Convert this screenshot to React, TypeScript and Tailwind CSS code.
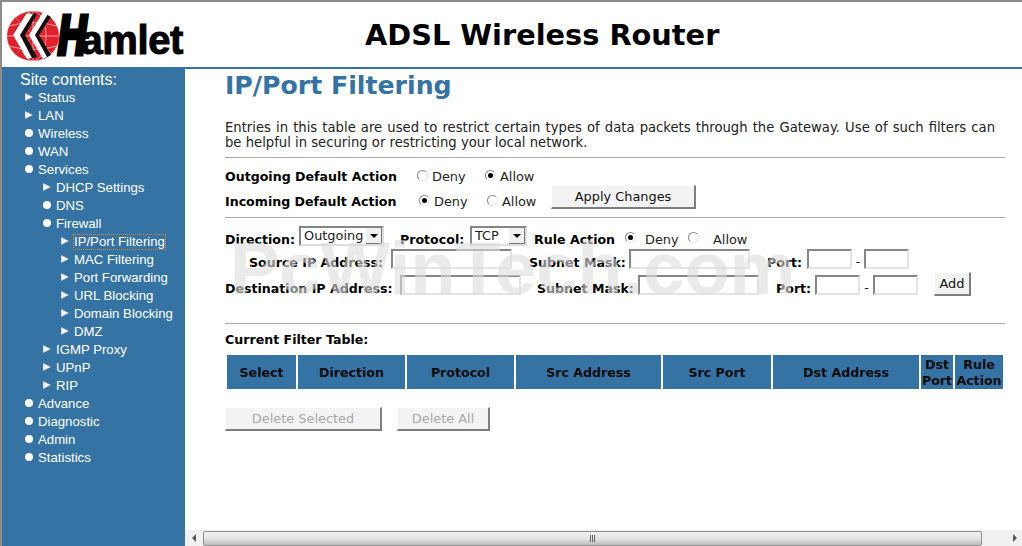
import React from 'react';

type NavItem = { label: string; level: number; icon: 'arrow' | 'dot'; active?: boolean };

const navItems: NavItem[] = [
  { label: 'Status', level: 1, icon: 'arrow' },
  { label: 'LAN', level: 1, icon: 'arrow' },
  { label: 'Wireless', level: 1, icon: 'dot' },
  { label: 'WAN', level: 1, icon: 'dot' },
  { label: 'Services', level: 1, icon: 'dot' },
  { label: 'DHCP Settings', level: 2, icon: 'arrow' },
  { label: 'DNS', level: 2, icon: 'dot' },
  { label: 'Firewall', level: 2, icon: 'dot' },
  { label: 'IP/Port Filtering', level: 3, icon: 'arrow', active: true },
  { label: 'MAC Filtering', level: 3, icon: 'arrow' },
  { label: 'Port Forwarding', level: 3, icon: 'arrow' },
  { label: 'URL Blocking', level: 3, icon: 'arrow' },
  { label: 'Domain Blocking', level: 3, icon: 'arrow' },
  { label: 'DMZ', level: 3, icon: 'arrow' },
  { label: 'IGMP Proxy', level: 2, icon: 'arrow' },
  { label: 'UPnP', level: 2, icon: 'arrow' },
  { label: 'RIP', level: 2, icon: 'arrow' },
  { label: 'Advance', level: 1, icon: 'dot' },
  { label: 'Diagnostic', level: 1, icon: 'dot' },
  { label: 'Admin', level: 1, icon: 'dot' },
  { label: 'Statistics', level: 1, icon: 'dot' },
];

const levelClass: Record<number, string> = {
  1: 'pl-[23px]',
  2: 'pl-[41px]',
  3: 'pl-[59px]',
};

const columns = [
  { label: 'Select', cls: 'w-[69px]' },
  { label: 'Direction', cls: 'w-[107px]' },
  { label: 'Protocol', cls: 'w-[107px]' },
  { label: 'Src Address', cls: 'w-[145px]' },
  { label: 'Src Port', cls: 'w-[108px]' },
  { label: 'Dst Address', cls: 'w-[146px]' },
  { label: 'Dst Port', cls: 'w-[32px]' },
  { label: 'Rule Action', cls: 'w-[48px]' },
];

const Logo = () => (
  <div className="flex items-center h-[52px] pl-[5px]">
    <svg width="52" height="50" viewBox="0 0 52 50" className="shrink-0">
      <ellipse cx="26" cy="25" rx="26" ry="25" fill="#e0202a" />
      <g fill="none" stroke="#f6b0b0" strokeWidth="0.9">
        <ellipse cx="26" cy="25" rx="13" ry="25" />
        <path d="M2 15 Q26 8 50 15 M2 35 Q26 42 50 35 M26 0 V50 M0 25 H52" />
        <path d="M8 6 L46 44 M44 6 L10 42" opacity="0.6" />
      </g>
      <path d="M21 2 L8 24 L22 48 L30 46 L18 24 L30 3 Z" fill="#111" />
      <path d="M20 2 L6 24 L20 48 L25 47 L13 24 L26 3 Z" fill="#fff" />
      <path d="M37 2 L23 24 L37 48 L44 44 L32 24 L44 6 Z" fill="#111" />
      <path d="M36 1 L22 24 L36 48 L40 46 L28 24 L41 3 Z" fill="#fff" />
    </svg>
    <div className="flex items-baseline text-black font-bold font-['Liberation_Sans',Arial,sans-serif] -ml-[1px] mt-[4px]">
      <span className="inline-block italic text-[56px] leading-[50px] [-webkit-text-stroke:5px_#000] scale-x-[0.7] origin-left">H</span>
      <span className="text-[40px] leading-[50px] tracking-[-0.4px] [-webkit-text-stroke:1px_#000] -ml-[18px]">amlet</span>
    </div>
  </div>
);

const Arrow = () => (
  <svg width="8" height="8" viewBox="0 0 8 8" className="shrink-0 mr-[5px] mt-[-3px]">
    <path d="M0 0 L8 4 L0 8 Z" fill="#f4f4f4" stroke="#6b7f90" strokeWidth="0.4" />
  </svg>
);

const Dot = () => <span className="shrink-0 w-[8px] h-[8px] mr-[5px] mt-[-3px] rounded-full bg-white shadow-[0_0_1px_#555]" />;

const Sidebar = () => (
  <nav className="w-[183px] shrink-0 bg-[#3573a5] text-white font-['Liberation_Sans',Arial,sans-serif] pt-[2px]">
    <div className="pl-[18px] text-[16px] leading-[18px]">Site contents:</div>
    {navItems.map(item => (
      <div key={item.label} className={`flex items-center h-[18px] text-[13.2px] ${levelClass[item.level]}`}>
        {item.icon === 'arrow' ? <Arrow /> : <Dot />}
        <span className={item.active ? 'outline-1 outline-dotted outline-[#e0862a] leading-[14px]' : ''}>{item.label}</span>
      </div>
    ))}
  </nav>
);

const Radio = ({ on, className = '' }: { on?: boolean; className?: string }) => (
  <span className={`inline-flex items-center justify-center shrink-0 w-[11px] h-[11px] -mt-[2px] rounded-full border border-t-[#868686] border-l-[#868686] border-r-[#e8e8e8] border-b-[#e8e8e8] bg-white ${className}`}>
    {on && <span className="w-[5px] h-[5px] rounded-full bg-black" />}
  </span>
);

const ClassicButton = ({ children, className = '', disabled }: { children: React.ReactNode; className?: string; disabled?: boolean }) => (
  <button
    disabled={disabled}
    className={`h-[24px] shrink-0 pt-[2px] bg-[#f3f3f3] border-r-2 border-b-2 border-r-[#7e7e7e] border-b-[#7e7e7e] border-t border-l border-t-white border-l-white text-[12.9px] leading-none ${disabled ? 'text-[#a9a9a9]' : 'text-[#111]'} ${className}`}
  >
    {children}
  </button>
);

const TextBox = ({ className = '' }: { className?: string }) => (
  <input
    readOnly
    className={`h-[20px] shrink-0 bg-transparent border-2 border-t-[#868686] border-l-[#868686] border-r-[#e4e4e4] border-b-[#e4e4e4] ${className}`}
  />
);

const SelectBox = ({ value, className = '' }: { value: string; className?: string }) => (
  <span className={`inline-flex items-center justify-between shrink-0 h-[20px] border-2 border-t-[#868686] border-l-[#868686] border-r-[#dcdcdc] border-b-[#dcdcdc] pl-[3px] text-[12.9px] text-[#222] ${className}`}>
    <span>{value}</span>
    <span className="flex items-center justify-center w-[16px] h-[16px] bg-[#efefef] border-r border-b border-[#777]">
      <span className="w-0 h-0 border-x-[4px] border-x-transparent border-t-[4px] border-t-black" />
    </span>
  </span>
);

const Label = ({ children, className = '' }: { children: React.ReactNode; className?: string }) => (
  <b className={`shrink-0 mt-[8px] text-[12.6px] whitespace-nowrap ${className}`}>{children}</b>
);

const App = () => (
  <div className="relative w-[1022px] h-[546px] overflow-hidden bg-white flex flex-col border-t-2 border-l-2 border-[#8c8c8c] font-['DejaVu_Sans',Verdana,sans-serif] text-[12.9px] text-black">
    <header className="h-[67px] shrink-0 flex items-center border-b-2 border-[#3573a5]">
      <div className="w-[183px] shrink-0 pt-[2px]">
        <Logo />
      </div>
      <h1 className="ml-[180px] mt-[3px] text-[28.8px] font-bold whitespace-nowrap text-black">ADSL Wireless Router</h1>
    </header>

    <div className="flex flex-1 min-h-0">
      <Sidebar />
      <div className="flex-1 flex flex-col min-w-0">
        <main className="flex-1 pl-[40px] pr-[17px]">
          <h2 className="text-[25.2px] leading-[30px] font-bold text-[#3573a5] mt-[2px]">IP/Port Filtering</h2>
          <p className="mt-[19px] leading-[15px] text-justify text-[13.2px] text-[#222] w-[770px]">
            Entries in this table are used to restrict certain types of data packets through the Gateway. Use of such filters can be helpful in securing or restricting your local network.
          </p>
          <hr className="mt-[7px] w-[780px] border-t border-[#aaa]" />

          <div className="flex items-center h-[24px] mt-[6px]">
            <b className="w-[192px] mt-[2px] text-[12.6px]">Outgoing Default Action</b>
            <Radio />
            <span className="ml-[4px] w-[53px] mt-[2px] text-[#222]">Deny</span>
            <Radio on />
            <span className="ml-[4px] mt-[2px] text-[#222]">Allow</span>
          </div>
          <div className="flex items-center h-[24px] mt-[1px]">
            <b className="w-[194px] mt-[2px] text-[12.6px]">Incoming Default Action</b>
            <Radio on />
            <span className="ml-[4px] w-[53px] mt-[2px] text-[#222]">Deny</span>
            <Radio />
            <span className="ml-[4px] w-[49px] mt-[2px] text-[#222] whitespace-nowrap">Allow</span>
            <ClassicButton className="w-[145px] -mt-[8px]">Apply Changes</ClassicButton>
          </div>
          <hr className="mt-[4px] w-[780px] border-t border-[#aaa]" />

          <div className="flex items-center h-[20px] mt-[8px] whitespace-nowrap">
            <Label className="w-[74px]">Direction:</Label>
            <SelectBox value="Outgoing" className="w-[85px]" />
            <Label className="ml-[16px] w-[70px]">Protocol:</Label>
            <SelectBox value="TCP" className="w-[57px]" />
            <Label className="ml-[7px] w-[91px]">Rule Action</Label>
            <Radio on className="translate-y-[2px]" />
            <span className="ml-[9px] mt-[8px] w-[43px] text-[#222]">Deny</span>
            <Radio className="translate-y-[2px]" />
            <span className="ml-[14px] mt-[8px] text-[#222]">Allow</span>
          </div>
          <div className="flex items-center h-[20px] mt-[3px]">
            <Label className="ml-[24px] w-[142px]">Source IP Address:</Label>
            <TextBox className="w-[121px]" />
            <Label className="ml-[17px] w-[100px]">Subnet Mask:</Label>
            <TextBox className="w-[121px]" />
            <Label className="ml-[17px] w-[40px]">Port:</Label>
            <TextBox className="w-[45px]" />
            <span className="w-[12px] mt-[6px] text-center text-[#222]">-</span>
            <TextBox className="w-[45px]" />
          </div>
          <div className="flex items-center h-[20px] mt-[6px]">
            <Label className="w-[175px]">Destination IP Address:</Label>
            <TextBox className="w-[121px]" />
            <Label className="ml-[16px] w-[101px]">Subnet Mask:</Label>
            <TextBox className="w-[121px]" />
            <Label className="ml-[17px] w-[39px]">Port:</Label>
            <TextBox className="w-[45px]" />
            <span className="w-[13px] mt-[6px] text-center text-[#222]">-</span>
            <TextBox className="w-[45px]" />
            <ClassicButton className="ml-[16px] w-[37px] -mt-[2px]">Add</ClassicButton>
          </div>
          <hr className="mt-[28px] w-[780px] border-t border-[#aaa]" />

          <div className="mt-[8px] font-bold text-[12.6px] leading-[16px]">Current Filter Table:</div>
          <div className="flex gap-[2px] mt-[7px] ml-[2px]">
            {columns.map(col => (
              <div key={col.label} className={`${col.cls} h-[34px] pt-[1px] bg-[#3573a5] flex items-center justify-center text-center font-bold text-[12.6px] leading-[16px] text-[#0c0c0c]`}>
                {col.label}
              </div>
            ))}
          </div>
          <div className="flex gap-[15px] mt-[18px]">
            <ClassicButton disabled className="w-[157px]">Delete Selected</ClassicButton>
            <ClassicButton disabled className="w-[93px]">Delete All</ClassicButton>
          </div>
        </main>

        {/* bottom scrollbar */}
        <div className="h-[16px] shrink-0 flex items-center bg-[#f0f0f0]">
          <span className="w-[18px] flex justify-center">
            <span className="w-0 h-0 border-y-[4px] border-y-transparent border-r-[4px] border-r-[#555]" />
          </span>
          <div className="w-[779px] h-[15px] flex items-center justify-center gap-[1px] border border-[#8f8f8f] rounded-[2px] bg-gradient-to-b from-[#f2f2f2] via-[#e4e4e4] to-[#bcbcbc]">
            <span className="w-[1px] h-[7px] bg-[#666]" />
            <span className="w-[1px] h-[7px] bg-[#666]" />
            <span className="w-[1px] h-[7px] bg-[#666]" />
          </div>
          <span className="flex-1 flex justify-end pr-[5px]">
            <span className="w-0 h-0 border-y-[4px] border-y-transparent border-l-[4px] border-l-[#555]" />
          </span>
        </div>
      </div>
    </div>

    {/* site watermark over the form */}
    <div className="absolute left-[228px] top-[231px] pointer-events-none whitespace-nowrap font-['Liberation_Sans',Arial,sans-serif] font-bold text-[74px] leading-[72px] text-[#dcdcdc]/60">
      PcWinTech.com
    </div>
  </div>
);

export default App;
